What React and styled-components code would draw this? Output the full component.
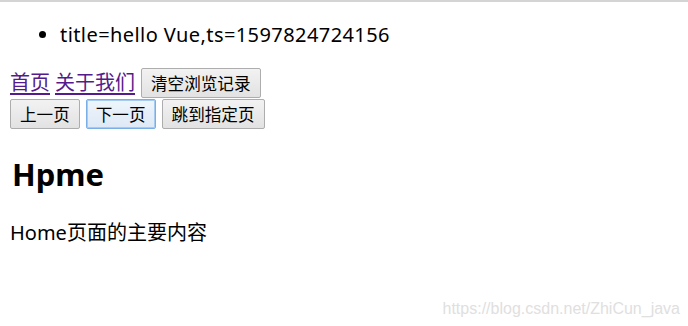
import React from "react";
import styled, { createGlobalStyle } from "styled-components";

const GlobalStyle = createGlobalStyle`
  html, body {
    margin: 0;
    padding: 0;
    background: #fff;
  }
  body {
    font-family: "Noto Sans", "Noto Sans CJK SC", sans-serif;
    color: #000;
  }
`;

const Page = styled.div`
  position: relative;
  width: 688px;
  height: 326px;
  box-sizing: border-box;
  border-top: 2px solid #d4d4d4;
  padding: 0 10px;
  overflow: hidden;
`;

const List = styled.ul`
  margin: 20px 0 0;
  padding-left: 50px;
  font-size: 20px;
  line-height: 26px;
  letter-spacing: 0.42px;
`;

const Nav = styled.div`
  display: flex;
  align-items: center;
  gap: 6px;
  margin-top: 20px;
  height: 30px;
`;

const NavLink = styled.a`
  font-size: 20px;
  line-height: 26px;
  color: #551a8b;
  text-decoration: underline;
  text-underline-offset: 3px;
  cursor: pointer;
  & + & {
    margin-left: -1px;
  }
`;

const Controls = styled.div`
  display: flex;
  gap: 6px;
  margin-top: 1px;
`;

const Button = styled.button`
  height: 30px;
  padding: 0 9px;
  font-family: "Noto Sans CJK SC", sans-serif;
  font-size: 16.6px;
  line-height: 28px;
  color: #000;
  border: 1px solid ${(p) => (p.$focused ? "#7aaee6" : "#adadad")};
  background: ${(p) =>
    p.$focused
      ? "linear-gradient(#eef5fc, #dde9f6)"
      : "linear-gradient(#f2f2f2, #e2e2e2)"};
  box-shadow: ${(p) => (p.$focused ? "0 0 0 1px #a6cbf1 inset" : "none")};
  border-radius: 2px;
  cursor: pointer;
`;

const Title = styled.h1`
  margin: 25px 0 0;
  padding-left: 2px;
  font-size: 31px;
  line-height: 40px;
  font-weight: 700;
`;

const Text = styled.p`
  margin: 26px 0 0;
  font-size: 20px;
  line-height: 26px;
`;

const Watermark = styled.div`
  position: absolute;
  right: 8px;
  bottom: 8px;
  font-family: "Liberation Sans", Arial, sans-serif;
  font-size: 16px;
  line-height: 18px;
  color: #e0e0e0;
`;

export default function App() {
  return (
    <>
      <GlobalStyle />
      <Page>
        <List>
          <li>title=hello Vue,ts=1597824724156</li>
        </List>
        <Nav>
          <NavLink>首页</NavLink>
          <NavLink>关于我们</NavLink>
          <Button>清空浏览记录</Button>
        </Nav>
        <Controls>
          <Button>上一页</Button>
          <Button $focused>下一页</Button>
          <Button>跳到指定页</Button>
        </Controls>
        <Title>Hpme</Title>
        <Text>Home页面的主要内容</Text>
        <Watermark>https://blog.csdn.net/ZhiCun_java</Watermark>
      </Page>
    </>
  );
}
